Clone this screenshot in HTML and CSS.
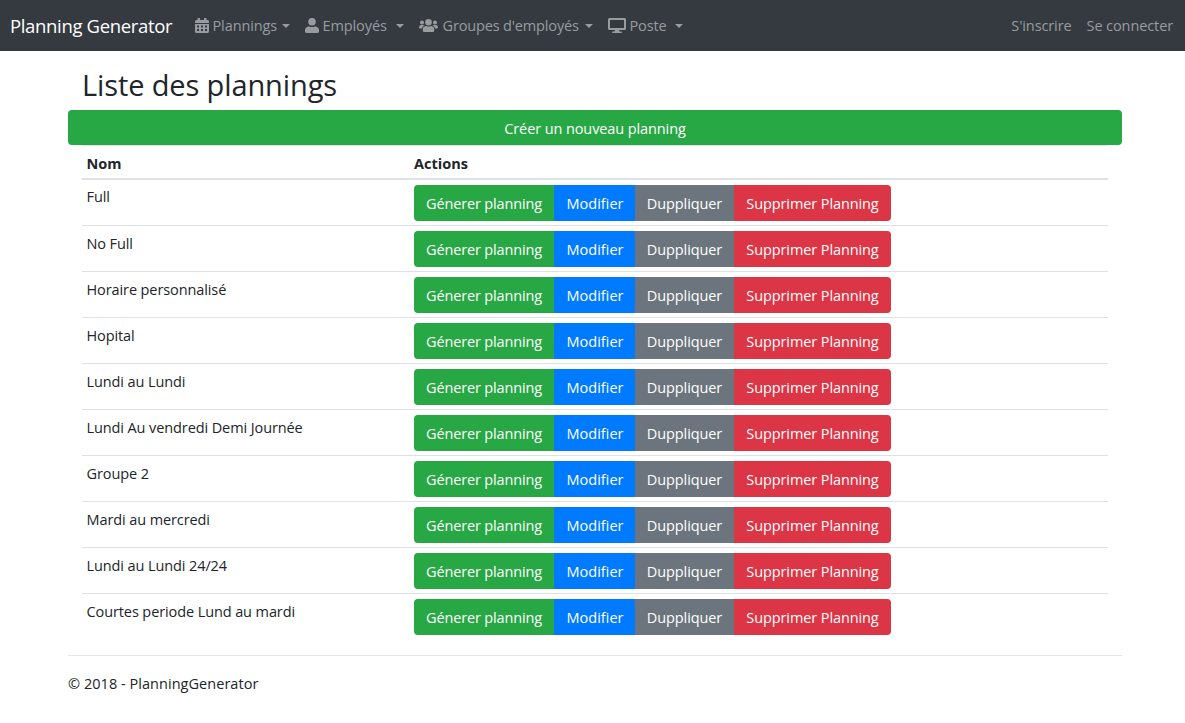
FILE: index.html
```html
<!DOCTYPE html>
<html lang="fr">
<head>
<meta charset="utf-8">
<title>Liste des plannings - Planning Generator</title>
<link rel="stylesheet" href="styles.css">
</head>
<body>
<nav class="navbar">
  <a class="brand">Planning Generator</a>
  <div class="menu">
    <a class="item item-plannings"><svg class="icon" width="14" height="15" viewBox="0 0 14 15"><path fill-rule="evenodd" d="M3 0h1.500q.5 0 .5.500V2h4V.5Q9 0 9.500 0H11q.5 0 .5.500V2h1q1.500 0 1.500 1.500V5H0V3.500Q0 2 1.500 2h1V.5Q2.500 0 3 0zM0 6h14v7.500q0 1.500-1.500 1.500h-11Q0 15 0 13.500zM2 7.500v2h2v-2zm4 0v2h2v-2zm4 0v2h2v-2zM2 11v2h2v-2zm4 0v2h2v-2zm4 0v2h2v-2z"/></svg><span class="label">Plannings</span><i class="caret"></i></a>
    <a class="item item-employes"><svg class="icon" width="14" height="15" viewBox="0 0 14 15"><circle cx="7" cy="3.800" r="3.800"/><path d="M3.500 8.500h.8q2.700 1.200 5.400 0h.8Q14 9 14 12v1.500q0 1.500-1.500 1.500h-11Q0 15 0 13.500V12Q0 9 3.500 8.500z"/></svg><span class="label">Employés</span><i class="caret"></i></a>
    <a class="item item-groupes"><svg class="icon" width="19" height="15" viewBox="0 0 19 15"><circle cx="9.500" cy="4.300" r="3.300"/><circle cx="3" cy="4.500" r="2"/><circle cx="16" cy="4.500" r="2"/><path d="M6.500 8h.7q2.300 1 4.600 0h.7q2.700.6 2.700 3.100v1.400q0 1.500-1.400 1.500H5.200q-1.400 0-1.400-1.500v-1.400Q3.800 8.600 6.500 8zM1.900 7h2.200q.8 0 1.300.5Q3.300 8.300 3 10.500H1q-1 0-1-1Q0 7 1.900 7zM17.100 7h-2.200q-.8 0-1.300.5 2.100.8 2.400 3h2q1 0 1-1Q19 7 17.100 7z"/></svg><span class="label">Groupes d'employés</span><i class="caret"></i></a>
    <a class="item item-poste"><svg class="icon" width="18" height="15" viewBox="0 0 18 15"><path fill-rule="evenodd" d="M1.500 0h15Q18 0 18 1.500v9q0 1.500-1.500 1.500H11l.5 1.500h1.700q.8 0 .8.750t-.8.750H4.800Q4 15 4 14.250t.8-.75h1.700L7 12H1.500Q0 12 0 10.500v-9Q0 0 1.500 0zM2 2v8h14V2z"/></svg><span class="label">Poste</span><i class="caret"></i></a>
  </div>
  <div class="account"><a class="signup">S'inscrire</a><a class="login">Se connecter</a></div>
</nav>
<main class="container">
  <h2 class="title">Liste des plannings</h2>
  <a class="create">Créer un nouveau planning</a>
  <table class="table">
    <thead><tr><th class="name">Nom</th><th>Actions</th></tr></thead>
    <tbody id="rows"></tbody>
  </table>
  <footer class="footer">© 2018 - PlanningGenerator</footer>
</main>
<script src="app.js"></script>
</body>
</html>
```
FILE: styles.css
```css
* { box-sizing: border-box; }
body { margin: 0; background: #fff; color: #212529; font: 14.5px/22px "Open Sans", "Noto Sans", sans-serif; letter-spacing: -0.1px; }
.navbar { display: flex; align-items: center; height: 51px; padding: 0 12px 0 10px; background: #343a40; color: #999c9f; white-space: nowrap; }
.brand { width: 185px; color: #fff; font-size: 18.5px; letter-spacing: -0.34px; }
.menu { display: flex; flex: 1; }
.item { display: flex; align-items: center; }
.icon { flex: none; margin-right: 3.5px; fill: currentColor; }
.item-groupes .icon { margin-right: 4.5px; }
.label { flex: 1; }
.item-groupes .label { letter-spacing: -0.15px; }
.caret { flex: none; border: 4.5px solid transparent; border-top-color: currentColor; border-bottom: 0; }
.item-plannings { width: 95px; margin-right: 15px; }
.item-employes { width: 99px; margin-right: 15px; }
.item-groupes { width: 174px; margin-right: 15px; }
.item-poste { width: 75px; }
.account { display: flex; gap: 15px; }
.container { width: 1054px; margin: 0 auto 0 68px; }
.title { margin: 0; padding: 16px 14px 7px; font-size: 29px; line-height: 36px; font-weight: 400; letter-spacing: -0.12px; }
.create { display: block; height: 35px; border-radius: 4px; background: #28a745; color: #fff; line-height: 37px; text-align: center; }
.table { width: 1026px; margin: 0 14px; border-spacing: 0; table-layout: fixed; }
.table th { height: 35px; padding: 3px 5px 0; border-top: 1px solid #dee2e6; border-bottom: 2px solid #dee2e6; text-align: left; font-weight: 700; letter-spacing: 0; }
.table .name { width: 327px; }
.table th:first-child, .table td:first-child { padding-left: 4.5px; }
.table td { height: 46px; padding: 5px 5px 4px; border-top: 1px solid #dee2e6; vertical-align: top; }
.table td:first-child { padding-top: 7px; }
.table tr:first-child td { height: 45px; border-top: 0; }
.table tr:first-child td:first-child { padding-top: 6px; }
.actions { display: flex; height: 36px; color: #fff; line-height: 37px; text-align: center; }
.btn { white-space: nowrap; }
.generate { width: 140px; border-radius: 4px 0 0 4px; background: #28a745; letter-spacing: -0.15px; }
.edit { width: 81px; padding-left: 1px; background: #007bff; letter-spacing: 0; }
.copy { width: 99px; background: #6c757d; }
.delete { width: 157px; border-radius: 0 4px 4px 0; background: #dc3545; }
.footer { margin-top: 16px; padding-top: 17px; border-top: 1px solid #e5e5e5; letter-spacing: 0.04px; }
```
FILE: app.js
```js
const plannings = ["Full", "No Full", "Horaire personnalisé", "Hopital", "Lundi au Lundi", "Lundi Au vendredi Demi Journée", "Groupe 2", "Mardi au mercredi", "Lundi au Lundi 24/24", "Courtes periode Lund au mardi"];
document.getElementById("rows").innerHTML = plannings.map(name => `<tr><td><span class="planning">${name}</span></td><td><div class="actions"><a class="btn generate"><span>Génerer planning</span></a><a class="btn edit"><span>Modifier</span></a><a class="btn copy"><span>Duppliquer</span></a><a class="btn delete"><span>Supprimer Planning</span></a></div></td></tr>`).join("");
```
